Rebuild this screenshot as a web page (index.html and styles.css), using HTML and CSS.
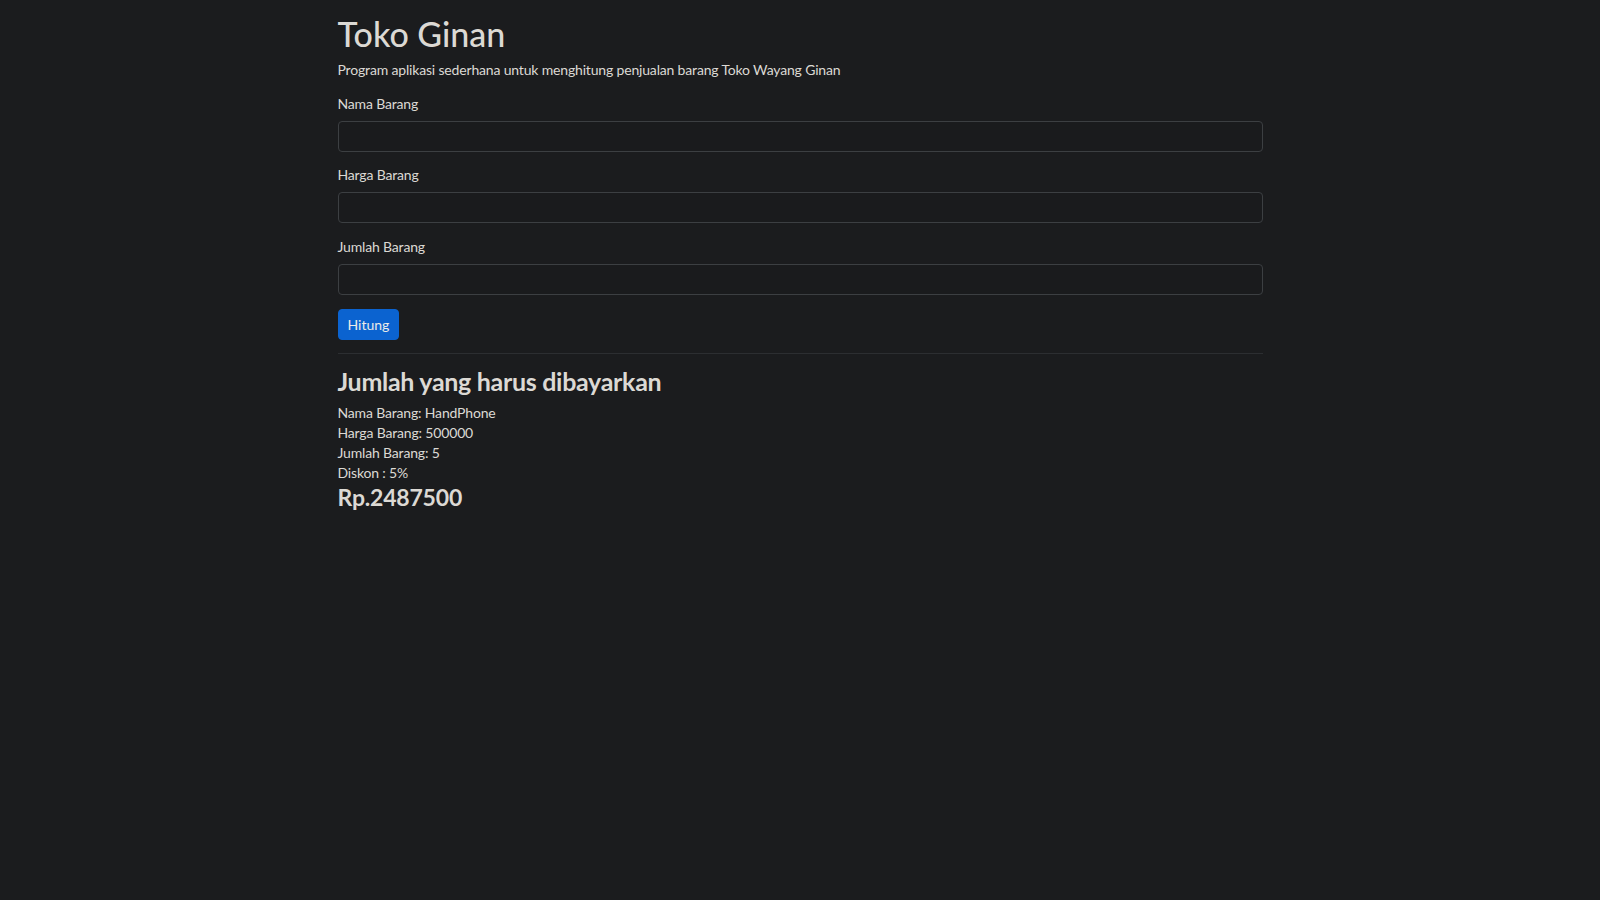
FILE: index.html
```html
<!DOCTYPE html>
<html lang="id">
<head>
<meta charset="utf-8">
<title>Toko Ginan</title>
<link rel="stylesheet" href="styles.css">
</head>
<body>
<main class="container">
  <h1 class="title">Toko Ginan</h1>
  <p class="lead">Program aplikasi sederhana untuk menghitung penjualan barang Toko Wayang Ginan</p>
  <form class="form">
    <div class="field">
      <label class="label" for="nama">Nama Barang</label>
      <input class="input" id="nama" type="text">
    </div>
    <div class="field">
      <label class="label" for="harga">Harga Barang</label>
      <input class="input" id="harga" type="text">
    </div>
    <div class="field">
      <label class="label" for="jumlah">Jumlah Barang</label>
      <input class="input" id="jumlah" type="text">
    </div>
    <button class="btn" type="button">Hitung</button>
  </form>
  <hr class="divider">
  <section class="result">
    <h3 class="result-title">Jumlah yang harus dibayarkan</h3>
    <div class="result-line">Nama Barang: HandPhone</div>
    <div class="result-line">Harga Barang: 500000</div>
    <div class="result-line">Jumlah Barang: 5</div>
    <div class="result-line">Diskon : 5%</div>
    <h4 class="total">Rp.2487500</h4>
  </section>
</main>
</body>
</html>
```

FILE: styles.css
```css
html, body {
  margin: 0;
  padding: 0;
  background: #1b1c1e;
}
body {
  font-family: "Segoe UI", Lato, "Noto Sans", sans-serif;
  font-size: 14px;
  line-height: 21px;
  letter-spacing: -0.17px;
  color: #dcd9d4;
}
.container {
  width: 925px;
  margin: 0 auto;
  padding-top: 14px;
}
.title {
  margin: 0 0 4px;
  font-size: 34px;
  line-height: 1.2;
  font-weight: 500;
  letter-spacing: 0;
}
.lead {
  margin: 0 0 13px;
}
.form {
  display: flex;
  flex-direction: column;
  align-items: flex-start;
}
.field {
  width: 100%;
  display: flex;
  flex-direction: column;
  margin-bottom: 12.4px;
}
.field:last-of-type {
  margin-bottom: 14px;
}
.label {
  display: block;
  margin-bottom: 7px;
}
.input {
  box-sizing: border-box;
  width: 100%;
  height: 31px;
  margin: 0;
  background: #1a1b1d;
  border: 1px solid #3c3f42;
  border-radius: 4px;
  color: #dcd9d4;
  font: inherit;
  padding: 0 10px;
  outline: none;
}
.btn {
  box-sizing: border-box;
  height: 31px;
  padding: 0 9px;
  background: #0b63d0;
  border: 1px solid #0b63d0;
  border-radius: 4px;
  color: #ecebe8;
  font: inherit;
  cursor: pointer;
}
.divider {
  margin: 13px 0 12px;
  border: 0;
  border-top: 1px solid #2c2e31;
  height: 0;
}
.result-title {
  margin: 0 0 7px;
  font-size: 25px;
  line-height: 1.2;
  font-weight: 700;
  letter-spacing: -0.3px;
}
.result-line {
  line-height: 20px;
}
.total {
  margin: 1px 0 0;
  font-size: 23px;
  line-height: 1.2;
  font-weight: 700;
  letter-spacing: -0.2px;
}
```
